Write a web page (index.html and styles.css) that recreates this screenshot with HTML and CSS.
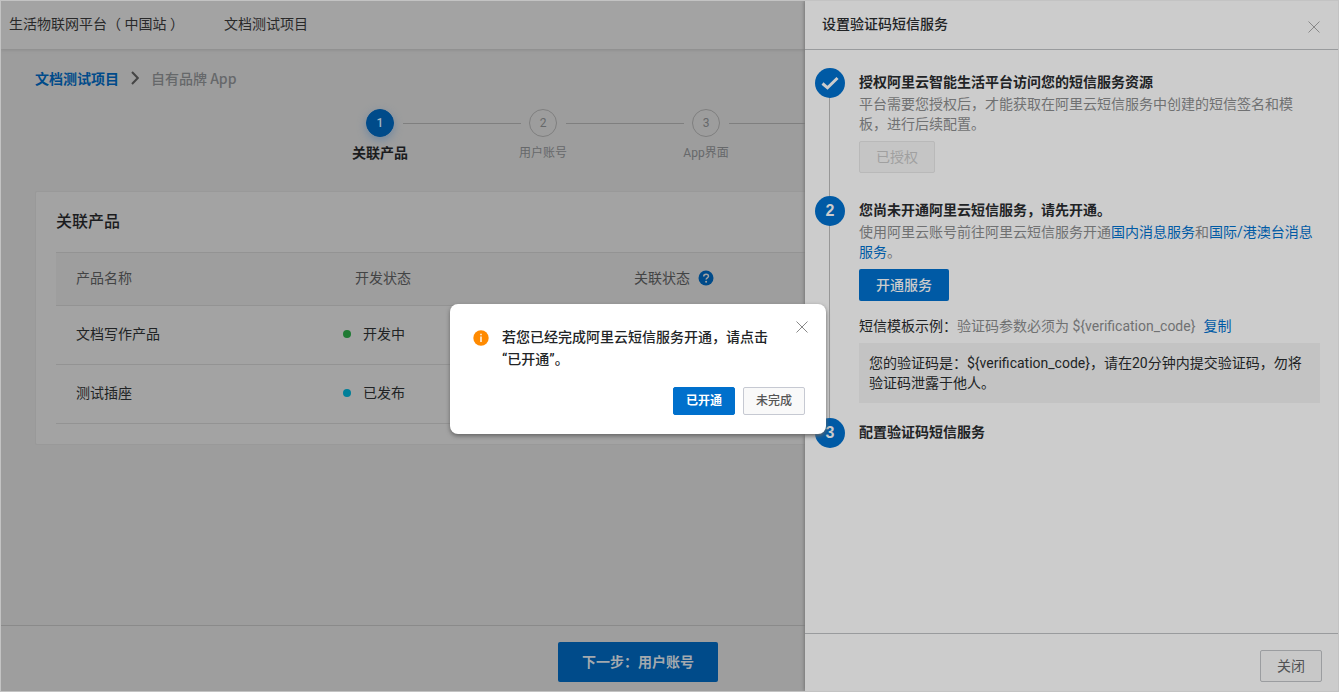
FILE: index.html
```html
<!DOCTYPE html>
<html lang="zh-CN">
<head>
<meta charset="utf-8">
<title>生活物联网平台</title>
<link rel="stylesheet" href="styles.css">
</head>
<body>
<div class="app">
  <header class="topbar">
    <span>生活物联网平台（ 中国站 ）</span>
    <span>文档测试项目</span>
  </header>
  <main class="content">
    <nav class="breadcrumb">
      <a href="#">文档测试项目</a>
      <svg class="chevron" viewBox="0 0 8 14" aria-hidden="true"><path d="M1 1l5.800 6L1 13"/></svg>
      <span>自有品牌 App</span>
    </nav>
    <ol class="steps">
      <li class="step step-active"><span class="step-dot">1</span><i class="step-line"></i><span class="step-label">关联产品</span></li>
      <li class="step"><span class="step-dot">2</span><i class="step-line"></i><span class="step-label">用户账号</span></li>
      <li class="step"><span class="step-dot">3</span><i class="step-line"></i><span class="step-label">App界面</span></li>
    </ol>
    <section class="card">
      <h2 class="card-title">关联产品</h2>
      <table class="products">
        <colgroup><col class="col-fixed"><col class="col-fixed"><col></colgroup>
        <thead>
          <tr><th>产品名称</th><th>开发状态</th><th><span class="with-help">关联状态
            <svg class="help" viewBox="0 0 16 16" role="img" aria-label="帮助"><circle class="help-bg" cx="8" cy="8" r="7.500"/><path class="help-mark" d="M5.700 6.500c0-3.200 4.800-3 4.800-.3 0 1.500-2.400 1.700-2.400 3.300"/><circle class="help-point" cx="8.100" cy="11.800" r="1"/></svg></span></th></tr>
        </thead>
        <tbody>
          <tr><td>文档写作产品</td><td class="cell-status"><span class="status status-dev">开发中</span></td><td></td></tr>
          <tr><td>测试插座</td><td class="cell-status"><span class="status status-live">已发布</span></td><td></td></tr>
        </tbody>
      </table>
    </section>
  </main>
  <footer class="bottombar"><button type="button" class="next">下一步：用户账号</button></footer>
</div>

<aside class="drawer">
  <header class="drawer-head">
    <h2>设置验证码短信服务</h2>
    <button type="button" class="close" aria-label="关闭面板"><svg viewBox="0 0 12 12"><path d="M.5.5l11 11M11.500.5l-11 11"/></svg></button>
  </header>
  <ol class="flow">
    <li class="flow-item flow-first">
      <span class="flow-dot"><svg viewBox="0 0 20 16" role="img" aria-label="已完成"><path d="M2.500 8.500 7.500 12.800 17.500 3"/></svg></span>
      <div class="flow-body">
        <h3>授权阿里云智能生活平台访问您的短信服务资源</h3>
        <p>平台需要您授权后，才能获取在阿里云短信服务中创建的短信签名和模板，进行后续配置。</p>
        <button type="button" class="btn btn-disabled" disabled>已授权</button>
      </div>
    </li>
    <li class="flow-item flow-second">
      <span class="flow-dot">2</span>
      <div class="flow-body">
        <h3>您尚未开通阿里云短信服务，请先开通。</h3>
        <p>使用阿里云账号前往阿里云短信服务开通<a href="#">国内消息服务</a>和<a href="#">国际/港澳台消息服务</a>。</p>
        <button type="button" class="btn btn-primary">开通服务</button>
        <div class="sample-head"><span>短信模板示例：</span><span class="sample-note">验证码参数必须为 ${verification_code}</span><a class="copy" href="#">复制</a></div>
        <div class="sample">您的验证码是：${verification_code}，请在20分钟内提交验证码，勿将验证码泄露于他人。</div>
      </div>
    </li>
    <li class="flow-item">
      <span class="flow-dot">3</span>
      <div class="flow-body"><h3>配置验证码短信服务</h3></div>
    </li>
  </ol>
  <footer class="drawer-foot"><button type="button" class="btn btn-outline">关闭</button></footer>
</aside>

<div class="dialog" role="dialog" aria-labelledby="dialog-text">
  <div class="dialog-main">
    <svg class="info" viewBox="0 0 16 16" aria-hidden="true"><circle cx="8" cy="8" r="7.700"/><path d="M7.300 3.800h1.400v1.400H7.300zM7.300 6.500h1.400v5.500H7.300z"/></svg>
    <p id="dialog-text">若您已经完成阿里云短信服务开通，请点击“已开通”。</p>
    <button type="button" class="close" aria-label="关闭对话框"><svg viewBox="0 0 12 12"><path d="M.5.5l11 11M11.500.5l-11 11"/></svg></button>
  </div>
  <div class="dialog-actions">
    <button type="button" class="small small-primary">已开通</button>
    <button type="button" class="small small-outline">未完成</button>
  </div>
</div>
</body>
</html>
```
FILE: styles.css
```css
* { box-sizing: border-box; }
body {
  margin: 0;
  height: 100vh;
  position: relative;
  overflow: hidden;
  border: 1px solid #c3c3c3;
  background: #9d9d9d;
  color: #212325;
  font: 14px/20px Roboto, "Noto Sans CJK SC", sans-serif;
}
button { font: inherit; margin: 0; padding: 0; cursor: pointer; }
h2, h3, p, ol { margin: 0; padding: 0; }
ol { list-style: none; }
a { color: #005aa5; text-decoration: none; }

.app { display: flex; flex-direction: column; height: 100%; }
.topbar {
  display: flex;
  gap: 40px;
  align-items: center;
  flex: none;
  height: 48px;
  padding: 0 8px 2px;
  background: #a3a3a3;
  box-shadow: 0 1px 3px #8a8a8a;
  color: #29292a;
}
.content { flex: 1; padding: 19px 34px 0; }
.breadcrumb {
  display: flex;
  align-items: center;
  gap: 12px;
  font-family: "Noto Sans CJK SC", sans-serif;
  font-weight: 500;
  color: #66686a;
}
.breadcrumb a { color: #004b8a; font-weight: 700; }
.chevron { width: 8px; height: 14px; fill: none; stroke: #454545; stroke-width: 2; }

.steps { display: flex; padding: 21px 0 0 317px; }
.step {
  display: grid;
  grid-template-columns: 56px 1fr;
  justify-items: center;
  align-items: center;
  row-gap: 6px;
  flex: 0 0 163px;
  font-size: 12px;
  color: #66686a;
}
.step-dot {
  display: grid;
  place-items: center;
  width: 28px;
  height: 28px;
  border: 1px solid #7f7f7f;
  border-radius: 50%;
}
.step-line { justify-self: stretch; height: 1px; margin: 0 -6px 0 -5px; background: #7f7f7f; }
.step-label { white-space: nowrap; }
.step-active .step-dot {
  border-color: #004b8a;
  background: #004b8a;
  color: #a3b5c4;
  font-weight: 500;
  box-shadow: 0 3px 8px #6f87a0;
}
.step-active .step-label { font-size: 14px; font-weight: 700; color: #1b1c1e; }

.card {
  margin-top: 28px;
  padding: 20px;
  border: 1px solid #999;
  border-radius: 2px;
  background: #a3a3a3;
}
.card-title { font-size: 16px; line-height: 20px; font-weight: 500; color: #1b1c1e; }
.products { width: 100%; margin-top: 20px; border-collapse: collapse; table-layout: fixed; }
.col-fixed { width: 279px; }
.products th, .products td { padding: 0 20px 2px; text-align: left; border-bottom: 1px solid #939393; }
.products th { height: 53px; font-weight: 400; color: #434445; background: #9e9e9e; border-top: 1px solid #939393; }
.products td { height: 59px; }
.products .cell-status { padding-left: 8px; }
.with-help { display: flex; align-items: center; gap: 8px; }
.help { width: 16px; height: 16px; }
.help-bg { fill: #004b8a; }
.help-mark { fill: none; stroke: #a3a3a3; stroke-width: 1.500; }
.help-point { fill: #a3a3a3; }
.status { display: flex; align-items: center; gap: 12px; }
.status::before { content: ""; width: 8px; height: 8px; border-radius: 50%; background: #1f7a33; }
.status-live::before { background: #007f99; }

.bottombar {
  display: flex;
  justify-content: center;
  align-items: center;
  flex: none;
  height: 66px;
  padding: 6px 63px 0 0;
  border-top: 1px solid #8a8a8a;
  background: #9e9e9e;
}
.next {
  width: 160px;
  height: 40px;
  border: 0;
  border-radius: 2px;
  background: #004b8a;
  color: #a3a9ae;
  font-weight: 700;
}

.drawer {
  position: absolute;
  top: 0;
  right: 0;
  bottom: 0;
  width: 533px;
  display: flex;
  flex-direction: column;
  background: #ccc;
  box-shadow: -1px 0 3px #777;
}
.drawer-head {
  display: flex;
  justify-content: space-between;
  align-items: center;
  height: 49px;
  padding: 0 18px 2px 17px;
  border-bottom: 1px solid #999b9d;
}
.drawer-head h2 { font-size: 14px; font-weight: 500; }
.close { display: grid; place-items: center; width: 12px; height: 12px; border: 0; background: none; }
.close svg { width: 12px; height: 12px; fill: none; stroke: #888; }
.drawer-head .close { margin-top: 6px; }
.flow { flex: 1; padding: 18px 18px 0 10px; }
.flow-item { display: flex; gap: 14px; position: relative; }
.flow-first { min-height: 128px; }
.flow-second { min-height: 222px; }
.flow-item:not(:last-child)::before {
  content: "";
  position: absolute;
  left: 14px;
  top: 0;
  bottom: 0;
  width: 1px;
  background: #979797;
}
.flow-dot {
  position: relative;
  display: grid;
  place-items: center;
  flex: none;
  width: 30px;
  height: 30px;
  border-radius: 50%;
  background: #005aa5;
  color: #ccc;
  font: 700 16px/20px "Liberation Sans", sans-serif;
}
.flow-dot svg { width: 20px; height: 16px; fill: none; stroke: #ccc; stroke-width: 3; }
.flow-body { flex: 1; min-width: 0; }
.flow-body h3 { padding-top: 3px; font-size: 14px; line-height: 22px; font-weight: 700; }
.flow-body p { margin-top: 1px; color: #707172; }
.btn { display: block; height: 32px; padding: 0 16px; border: 1px solid transparent; border-radius: 2px; }
.flow-body .btn { margin-top: 7px; }
.btn-disabled { border-color: #b9b9b9; background: #c5c5c5; color: #a0a0a0; cursor: default; }
.btn-primary { background: #005aa5; color: #ccc; font-weight: 500; }
.sample-head { display: flex; margin-top: 15px; }
.sample-note { color: #707172; }
.copy { margin-left: 8px; }
.sample { margin-top: 7px; padding: 10px; background: #c3c3c3; }
.drawer-foot {
  display: flex;
  justify-content: flex-end;
  height: 58px;
  padding: 16px;
  border-top: 1px solid #999b9d;
}
.btn-outline { border-color: #9b9da0; background: #c8c8c8; color: #515254; }

.dialog {
  position: absolute;
  left: 449px;
  top: 303px;
  width: 376px;
  padding: 22px 21px 19px 23px;
  border-radius: 8px;
  background: #fff;
  box-shadow: 0 2px 4px #666;
}
.dialog-main { display: flex; align-items: flex-start; color: #222426; line-height: 22px; }
.dialog-main p { flex: 1; margin-left: 13px; padding-right: 22px; font-weight: 500; }
.dialog-main .close { margin: -5px -3px 0 0; }
.info { width: 16px; height: 16px; margin-top: 4px; fill: #ff8a00; }
.info path { fill: #fff; }
.dialog-actions { display: flex; justify-content: flex-end; gap: 8px; margin-top: 17px; }
.small { width: 62px; height: 28px; border: 1px solid #0070cc; border-radius: 2px; font-size: 12px; line-height: 18px; }
.small-primary { background: #0070cc; color: #fff; font-weight: 700; }
.small-outline { border-color: #c6c9d2; background: #f9f9f9; color: #555; font-weight: 500; }
```
